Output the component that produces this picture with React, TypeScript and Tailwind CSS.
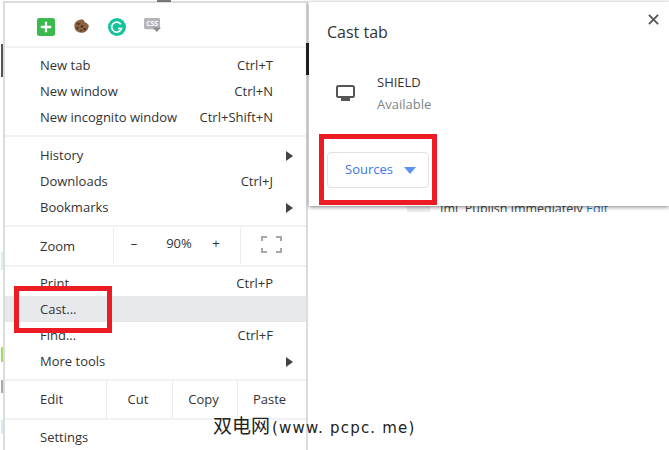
const font = { fontFamily: '"Open Sans", "Noto Sans", sans-serif' };

function Item({ label, keys, arrow, active }: { label: string; keys?: string; arrow?: boolean; active?: boolean }) {
  return (
    <div className={`flex h-[26px] items-center justify-between pl-[35px] pr-[33px] pt-[2px] ${active ? 'bg-[#e8e9ec]' : ''}`}>
      <span>{label}</span>
      {keys && <span>{keys}</span>}
      {arrow && <span className="-mr-[20px] h-0 w-0 border-y-[5px] border-l-[7px] border-y-transparent border-l-[#444]" />}
    </div>
  );
}

function Divider() {
  return <div className="h-[2px] bg-[#f2f2f2]" />;
}

function Extensions() {
  return (
    <div className="flex h-[43px] items-center gap-[18px] pl-[32px] pt-[4px]">
      <svg width="18" height="18" viewBox="0 0 19 19">
        <rect width="19" height="19" rx="2.5" fill="#3cb94d" />
        <path d="M9.5 4v11M4 9.5h11" stroke="#fff" strokeWidth="2.4" />
      </svg>
      <svg width="17" height="17" viewBox="0 0 19 18">
        <path d="M8 1.500c2-.5 4 0 4.500 1 0 1.500 1.500 2.500 3 2.500.500 1 1.500 2 2 2 .5 5-3 9-8 9s-8-3.500-8-7.500 3-6.500 6.500-7z" fill="#8a6240" />
        <g fill="#3a2a1c">
          <circle cx="6" cy="6" r="1.300" />
          <circle cx="10" cy="9" r="1.300" />
          <circle cx="5" cy="11" r="1.200" />
          <circle cx="13" cy="12" r="1.200" />
          <circle cx="9" cy="13.500" r="1" />
        </g>
      </svg>
      <svg width="18" height="18" viewBox="0 0 18 18">
        <circle cx="9" cy="9" r="9" fill="#15c39a" />
        <path d="M12.800 6.200A5 5 0 1 0 13.500 10.500H10" fill="none" stroke="#fff" strokeWidth="1.700" />
      </svg>
      <svg width="18" height="16" viewBox="0 0 19 17" className="-mt-[1px]">
        <rect width="17" height="12" rx="1.500" fill="#b5b5b5" />
        <path d="M9 10h9l-4.500 5z" fill="#8e8e8e" />
        <text x="8.500" y="9" textAnchor="middle" fontSize="7" fontWeight="700" fill="#fff" style={font}>CSS</text>
      </svg>
    </div>
  );
}

function ZoomRow() {
  return (
    <div className="flex h-[38px] items-center">
      <span className="w-[108px] pl-[35px] pt-[2px]">Zoom</span>
      <div className="flex h-[36px] w-[128px] items-center border-x border-[#ececec] pb-[4px]">
        <span className="w-[40px] text-center">–</span>
        <span className="w-[50px] text-center">90%</span>
        <span className="w-[24px] text-center">+</span>
      </div>
      <svg width="21" height="17" viewBox="0 0 21 17" className="-mt-[4px] ml-[20px]" fill="none" stroke="#a8a8a8" strokeWidth="2">
        <path d="M1 5V1h5M15 1h5v4M20 12v4h-5M6 16H1v-4" />
      </svg>
    </div>
  );
}

function EditRow() {
  return (
    <div className="flex h-[37px] items-center">
      <span className="w-[101px] pl-[35px]">Edit</span>
      <div className="flex h-[37px] flex-1 text-center">
        <span className="flex w-[66px] items-center justify-center border-l border-[#ececec] pr-[3px]">Cut</span>
        <span className="flex w-[65px] items-center justify-center border-l border-[#ececec] pr-[3px]">Copy</span>
        <span className="flex flex-1 items-center justify-center border-l border-[#ececec] pr-[5px]">Paste</span>
      </div>
    </div>
  );
}

function Menu() {
  return (
    <div className="ml-[3px] mt-[1px] h-[449px] w-[305px] overflow-hidden border-x-2 border-t-2 border-[#dcdcdc] bg-white text-[#333]">
      <Extensions />
      <Divider />
      <div className="pb-[5px] pt-[4px]">
        <Item label="New tab" keys="Ctrl+T" />
        <Item label="New window" keys="Ctrl+N" />
        <Item label="New incognito window" keys="Ctrl+Shift+N" />
      </div>
      <Divider />
      <div className="py-[5px]">
        <Item label="History" arrow />
        <Item label="Downloads" keys="Ctrl+J" />
        <Item label="Bookmarks" arrow />
      </div>
      <Divider />
      <ZoomRow />
      <Divider />
      <div className="pb-[5px] pt-[3px]">
        <Item label="Print" keys="Ctrl+P" />
        <Item label="Cast..." active />
        <Item label="Find..." keys="Ctrl+F" />
        <Item label="More tools" arrow />
      </div>
      <Divider />
      <EditRow />
      <Divider />
      <div className="pt-[4px]">
        <Item label="Settings" />
      </div>
    </div>
  );
}

function CastPanel() {
  return (
    <div className="absolute left-[309px] top-[2px] h-[204px] w-[360px] bg-white text-[#333] shadow-[0_1px_4px_rgba(0,0,0,0.5)]">
      <svg width="11" height="11" viewBox="0 0 12 12" className="absolute right-[10px] top-[12px]" stroke="#555" strokeWidth="2">
        <path d="M1 1l10 10M11 1L1 11" />
      </svg>
      <h2 className="pl-[18px] pt-[17px] text-[16px] leading-[26px]">Cast tab</h2>
      <div className="mt-[26px] flex items-center pl-[27px]">
        <svg width="19" height="16" viewBox="0 0 19 16" fill="none">
          <rect x="1" y="1" width="17" height="11" rx="1.500" stroke="#555" strokeWidth="2" />
          <path d="M5 14.500h9" stroke="#555" strokeWidth="3" />
        </svg>
        <div className="ml-[22px] text-[13px] leading-[22px]">
          <div>SHIELD</div>
          <div className="text-[#80868b]">Available</div>
        </div>
      </div>
      <button className="ml-[18px] mt-[37px] flex h-[36px] w-[102px] items-center rounded-[4px] border border-[#dfe1e5] pl-[17px] text-[#3b78e7]">
        Sources
        <span className="ml-[11px] h-0 w-0 border-x-[6px] border-t-[7px] border-x-transparent border-t-[#5a95f0]" />
      </button>
    </div>
  );
}

export default function App() {
  return (
    <div className="relative h-[450px] w-[669px] overflow-hidden bg-white text-[13px]" style={font}>
      <Menu />
      {/* bits of the page behind the menu */}
      <div className="absolute left-[1px] top-[44px] h-[33px] w-[2px] bg-[#555]" />
      <div className="absolute left-[1px] top-[252px] h-[18px] w-[2px] bg-[#d5f0ee]" />
      <div className="absolute left-[1px] top-[347px] h-[15px] w-[2px] bg-[#a5dc6a]" />
      <div className="absolute left-[1px] top-[380px] h-[13px] w-[2px] bg-[#aaa]" />
      <div className="absolute left-[1px] top-[420px] h-[14px] w-[2px] bg-[#d5ecee]" />
      <div className="absolute left-[306px] top-[43px] h-[32px] w-[3px] bg-[#222]" />
      <div className="absolute left-[157px] top-0 h-[2px] w-[14px] bg-[#777]" />
      <div className="absolute left-[407px] top-[204px] h-[8px] w-[23px] bg-[#ededed]" />
      <div className="absolute left-[440px] top-[200px] h-[12px] w-[170px] overflow-hidden whitespace-nowrap text-[12.500px] leading-[18px] text-[#444]">
        Iml&nbsp; Publish immediately <span className="text-[#2a6ebb]">Edit</span>
      </div>
      <CastPanel />
      <div className="absolute left-[14px] top-[286px] h-[47px] w-[98px] border-[5px] border-[#ed1c24]" />
      <div className="absolute left-[319px] top-[134px] h-[71px] w-[118px] border-[5px] border-[#ed1c24]" />
      <div className="absolute left-[213px] top-[414px] text-[19px] leading-[22px] text-[#222]" style={{ fontFamily: '"Noto Sans CJK SC", sans-serif' }}>
        双电网
        <span className="ml-[2px] text-[15px] tracking-[1.2px]" style={{ fontFamily: '"DejaVu Sans", sans-serif' }}>(www. pcpc. me)</span>
      </div>
    </div>
  );
}
